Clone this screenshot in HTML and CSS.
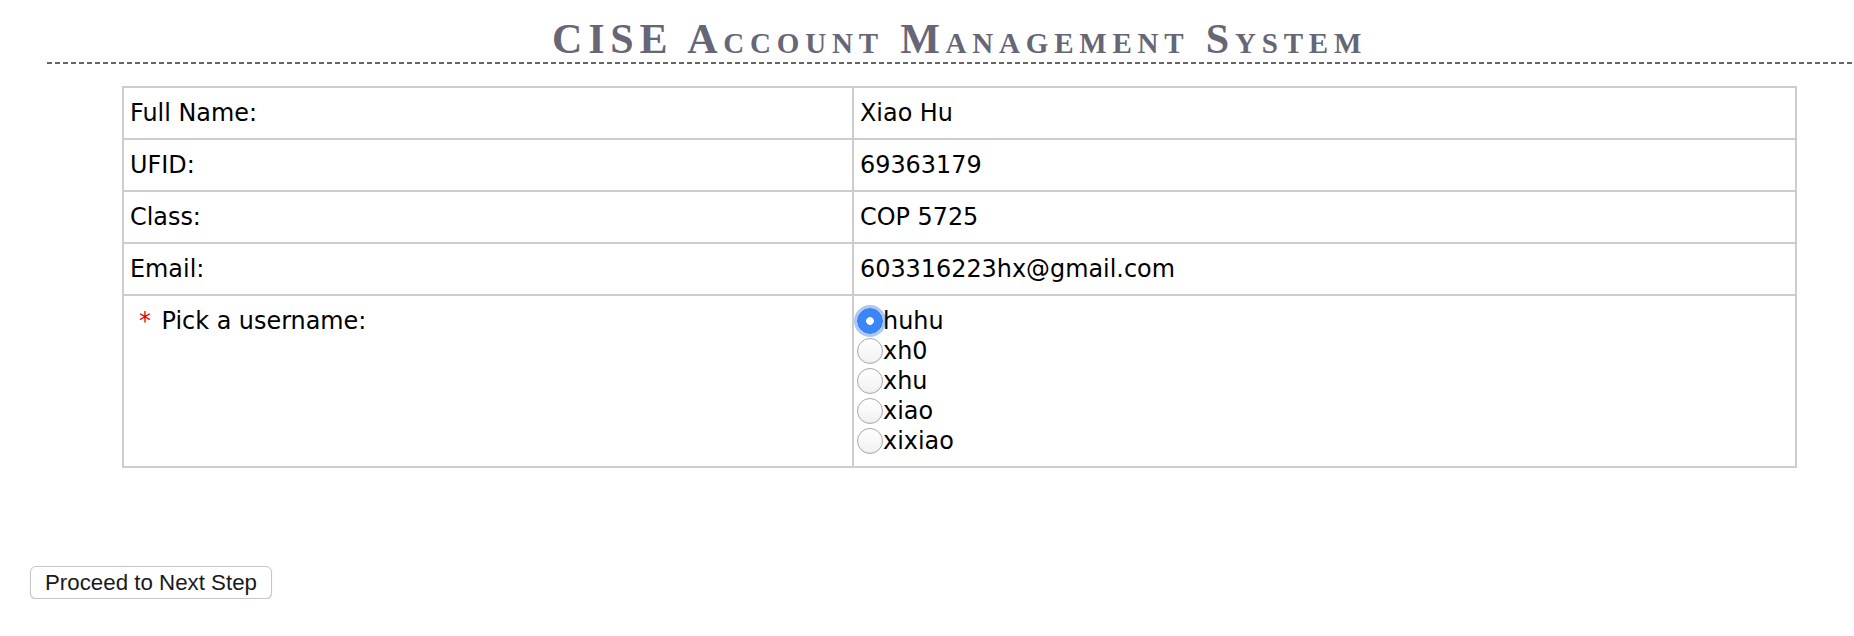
FILE: index.html
```html
<!DOCTYPE html>
<html lang="en">
<head>
<meta charset="utf-8">
<title>CISE Account Management System</title>
<link rel="stylesheet" href="styles.css">
</head>
<body>
<div class="banner">
  <h1 class="title">CISE Account Management System</h1>
</div>
<form class="form">
  <table class="info">
    <tr>
      <td class="label">Full Name:</td>
      <td class="value">Xiao Hu</td>
    </tr>
    <tr>
      <td class="label">UFID:</td>
      <td class="value">69363179</td>
    </tr>
    <tr>
      <td class="label">Class:</td>
      <td class="value">COP 5725</td>
    </tr>
    <tr>
      <td class="label">Email:</td>
      <td class="value">603316223hx@gmail.com</td>
    </tr>
    <tr class="pick">
      <td class="label"><span class="req">*</span> Pick a username:</td>
      <td class="value">
        <label class="opt"><input type="radio" name="username" value="huhu" checked>huhu</label>
        <label class="opt"><input type="radio" name="username" value="xh0">xh0</label>
        <label class="opt"><input type="radio" name="username" value="xhu">xhu</label>
        <label class="opt"><input type="radio" name="username" value="xiao">xiao</label>
        <label class="opt"><input type="radio" name="username" value="xixiao">xixiao</label>
      </td>
    </tr>
  </table>
  <div class="actions">
    <button type="button" class="btn">Proceed to Next Step</button>
  </div>
</form>
</body>
</html>
```
FILE: styles.css
```css
html, body {
  margin: 0;
  padding: 0;
  background: #fff;
}

body {
  width: 1854px;
  overflow: hidden;
}

.banner {
  margin-left: 47px;
  padding-top: 16px;
  padding-bottom: 2px;
  background-image: repeating-linear-gradient(to right, #666 0 5px, transparent 5px 8px);
  background-size: 100% 2px;
  background-repeat: no-repeat;
  background-position: left bottom;
}

.title {
  margin: 0;
  padding-left: 505px;
  font-family: "Liberation Serif", "Times New Roman", serif;
  font-weight: bold;
  font-variant: small-caps;
  font-size: 42px;
  line-height: 46px;
  letter-spacing: 5.8px;
  color: #666677;
  white-space: nowrap;
}

.info {
  margin: 22px 0 0 122px;
  width: 1675px;
  border-collapse: separate;
  border-spacing: 0;
  border-top: 2px solid #cdcdcd;
  border-left: 2px solid #cdcdcd;
  table-layout: fixed;
  font-family: "DejaVu Sans", Verdana, sans-serif;
  font-size: 23.9px;
  color: #000;
}

.info td {
  border-right: 2px solid #cdcdcd;
  border-bottom: 2px solid #cdcdcd;
  padding: 11px 6px;
  line-height: 28px;
  vertical-align: middle;
}

.info td.label {
  width: 730px;
  box-sizing: border-box;
  padding-left: 6px;
}

.pick td {
  vertical-align: top;
  padding-top: 10px;
  padding-bottom: 10px;
  line-height: 30px;
}

.req {
  color: #ee0000;
  margin-left: 9px;
  margin-right: 3px;
}

.opt {
  display: flex;
  align-items: center;
  height: 30px;
}

.opt input {
  -webkit-appearance: none;
  appearance: none;
  width: 26px;
  height: 26px;
  margin: 0 0 0 -3px;
  border-radius: 50%;
  border: 1px solid #a9a9a9;
  background: linear-gradient(#ffffff, #f1f1f1);
  box-shadow: inset 0 -1px 1px rgba(0, 0, 0, 0.04);
  box-sizing: border-box;
  flex: none;
}

.opt input:checked {
  border-color: #3578e8;
  background: radial-gradient(circle, #ffffff 0 3.5px, #3b86f7 4.2px);
  box-shadow: 0 0 0 3px rgba(100, 155, 240, 0.55);
}

.actions {
  margin: 98px 0 0 30px;
}

.btn {
  font-family: "Liberation Sans", Arial, sans-serif;
  font-size: 22.3px;
  line-height: 25px;
  color: #1a1a1a;
  background: #fff;
  border: 1px solid #c6c6c6;
  border-radius: 6px;
  padding: 3px 14px;
  box-shadow: 0 1px 1px rgba(0, 0, 0, 0.18);
  margin: 0;
}
```
